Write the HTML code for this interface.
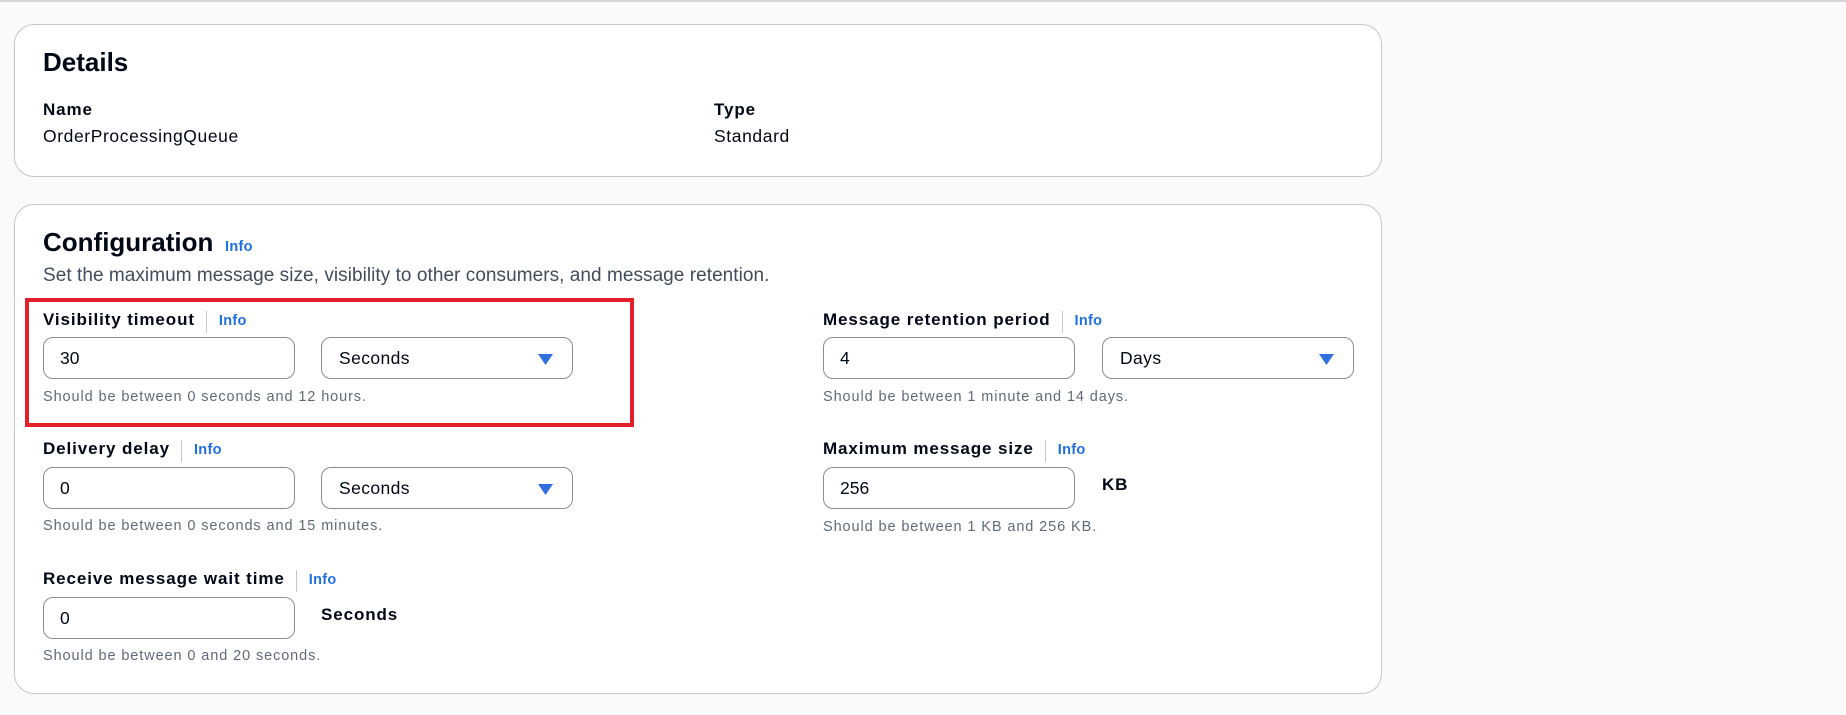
<!DOCTYPE html>
<html><head><meta charset="utf-8">
<style>
*{margin:0;padding:0;box-sizing:border-box}
body{width:1846px;height:715px;background:#fafafa;font-family:"Liberation Sans",sans-serif;color:#000716;position:relative;overflow:hidden}
.top{position:absolute;left:0;top:0;width:1846px;height:2px;background:#d5d6da}
.a{position:absolute;line-height:1;white-space:nowrap}
.card{position:absolute;left:14px;width:1368px;background:#fff;border:1px solid #c6c6cd;border-radius:20px}
.h{font-size:26px;font-weight:bold}
.lbl{font-size:17px;font-weight:bold;letter-spacing:0.9px}
.row{position:absolute;display:flex;align-items:baseline;line-height:1;white-space:nowrap;height:22px}
.row .d{width:1px;height:22px;background:#c6c6cd;margin:0 12px 0 11px;align-self:center}
.val{font-size:17.5px;letter-spacing:0.6px}
.info{font-size:14.5px;font-weight:bold;color:#1f6fde;letter-spacing:0.3px}
.hint{font-size:14.5px;color:#5f6b7a;letter-spacing:0.9px}
.desc{font-size:19px;color:#414d5c;letter-spacing:0.05px}
.in{position:absolute;width:252px;height:42px;border:1px solid #8c8c94;border-radius:10px;background:#fff;font-size:17.5px;display:flex;align-items:center;padding-left:16px}
.sel{position:absolute;width:252px;height:42px;border:1px solid #8c8c94;border-radius:10px;background:#fff;font-size:17.5px;display:flex;align-items:center;padding-left:17px;letter-spacing:0.4px}
.sel svg{position:absolute;right:19px;top:16px}
.red{position:absolute;left:25px;top:298px;width:609px;height:129px;border:4px solid #e3202a}
</style></head><body>
<div class="top"></div>
<div class="card" style="top:24px;height:153px"></div>
<div class="a h" style="left:43px;top:49px">Details</div>
<div class="a lbl" style="left:43px;top:101px">Name</div>
<div class="a val" style="left:43px;top:128px">OrderProcessingQueue</div>
<div class="a lbl" style="left:714px;top:101px">Type</div>
<div class="a val" style="left:714px;top:128px">Standard</div>

<div class="card" style="top:204px;height:490px"></div>
<div class="a h" style="left:43px;top:229px">Configuration</div>
<div class="a info" style="left:225px;top:240px">Info</div>
<div class="a desc" style="left:43px;top:266px">Set the maximum message size, visibility to other consumers, and message retention.</div>

<div class="red"></div>

<div class="row" style="left:43px;top:311px"><span class="lbl">Visibility timeout</span><span class="d"></span><span class="info">Info</span></div>
<div class="in" style="left:43px;top:337px">30</div>
<div class="sel" style="left:321px;top:337px">Seconds<svg width="15" height="11"><path d="M0 0H15L7.5 11Z" fill="#2f6fde"/></svg></div>
<div class="a hint" style="left:43px;top:390px">Should be between 0 seconds and 12 hours.</div>

<div class="row" style="left:43px;top:440px"><span class="lbl">Delivery delay</span><span class="d"></span><span class="info">Info</span></div>
<div class="in" style="left:43px;top:467px">0</div>
<div class="sel" style="left:321px;top:467px">Seconds<svg width="15" height="11"><path d="M0 0H15L7.5 11Z" fill="#2f6fde"/></svg></div>
<div class="a hint" style="left:43px;top:519px">Should be between 0 seconds and 15 minutes.</div>

<div class="row" style="left:43px;top:570px"><span class="lbl">Receive message wait time</span><span class="d"></span><span class="info">Info</span></div>
<div class="in" style="left:43px;top:597px">0</div>
<div class="a lbl" style="left:321px;top:606px">Seconds</div>
<div class="a hint" style="left:43px;top:649px">Should be between 0 and 20 seconds.</div>

<div class="row" style="left:823px;top:311px"><span class="lbl">Message retention period</span><span class="d"></span><span class="info">Info</span></div>
<div class="in" style="left:823px;top:337px">4</div>
<div class="sel" style="left:1102px;top:337px">Days<svg width="15" height="11"><path d="M0 0H15L7.5 11Z" fill="#2f6fde"/></svg></div>
<div class="a hint" style="left:823px;top:390px">Should be between 1 minute and 14 days.</div>

<div class="row" style="left:823px;top:440px"><span class="lbl">Maximum message size</span><span class="d"></span><span class="info">Info</span></div>
<div class="in" style="left:823px;top:467px">256</div>
<div class="a lbl" style="left:1102px;top:476px">KB</div>
<div class="a hint" style="left:823px;top:520px">Should be between 1 KB and 256 KB.</div>
</body></html>
